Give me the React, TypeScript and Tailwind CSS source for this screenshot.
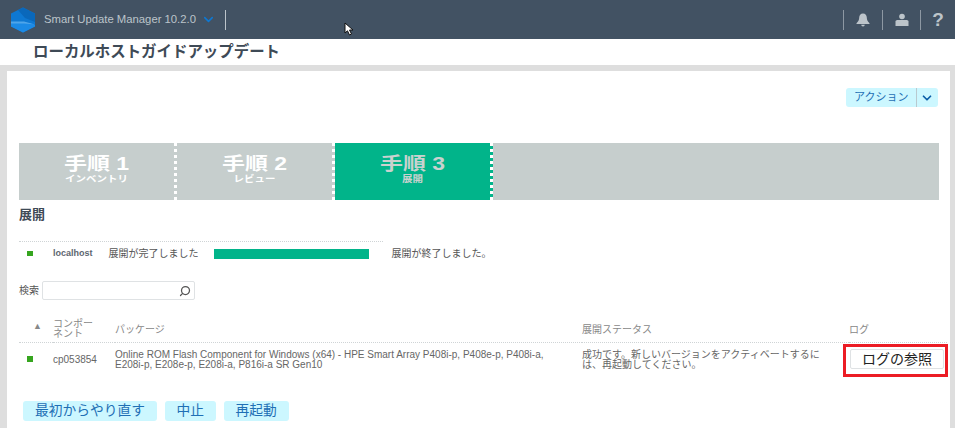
import { ChevronDown, Search } from "lucide-react";

const jp = "font-['Liberation_Sans','Noto_Sans_CJK_JP',sans-serif]";

function HexLogo() {
  return (
    <svg width="26" height="26" viewBox="0 0 26 26">
      <polygon points="13,0.5 25,6.5 25,19.5 13,25.5 1,19.5 1,6.5" fill="#0e78d2" />
      <polygon points="13,0.5 25,6.5 25,15 15,11 8,3" fill="#0a68bb" />
      <polygon points="1,15 14,15 25,18 25,19.5 13,25.5 1,19.5" fill="#1b8ae6" />
      <polygon points="1,14.500 14,14.500 25,17.500 14,16.500 1,16.500" fill="#4fa5ea" />
    </svg>
  );
}

function BellIcon() {
  return (
    <svg width="14" height="14" viewBox="0 0 14 14" fill="#bcc4ca">
      <path d="M7 .5c2.500 0 3.700 1.800 3.800 4 .1 2 .6 3.800 2.700 5.700V11H.5v-.8C2.600 8.300 3.100 6.500 3.200 4.500 3.300 2.300 4.500.5 7 .5z" />
      <path d="M5.200 11.800h3.600a1.800 1.600 0 0 1-3.600 0z" />
    </svg>
  );
}

function UserIcon() {
  return (
    <svg width="14" height="14" viewBox="0 0 14 14" fill="#bcc4ca">
      <ellipse cx="7" cy="3.500" rx="2.800" ry="2.800" />
      <path d="M.5 8.500c0-1 1-1.500 2.500-1.500h8c1.500 0 2.500.5 2.500 1.500V13H.5z" />
    </svg>
  );
}

function Cursor() {
  return (
    <svg className="absolute left-[344px] top-[22px]" width="10" height="14" viewBox="0 0 10 14">
      <path d="M1 1v10l2.500-2.200L5.500 13l2-1-2-4H9z" fill="#fff" stroke="#111" strokeWidth="1" />
    </svg>
  );
}

function Step({ title, sub, active }: { title: string; sub: string; active?: boolean }) {
  return (
    <div
      className={`flex h-full w-[158px] flex-col items-center border-r-[3px] border-dotted border-white pt-[11px] ${
        active ? "bg-[#01b48a] text-[#c9d2cf]" : "bg-[#c6cecd] text-white"
      }`}
    >
      <div className="scale-y-[0.78] text-[23px] leading-[21px] font-bold">{title}</div>
      <div className="mt-[-1px] scale-y-[0.85] text-[10.500px] leading-[10px] font-bold">{sub}</div>
    </div>
  );
}

function ActionButton({ label }: { label: string }) {
  return (
    <button className="h-[20px] rounded-[3px] bg-[#ccf7ff] px-[12px] text-[13.750px] leading-[20px] text-[#1f6fb5]">
      {label}
    </button>
  );
}

export default function App() {
  return (
    <div className={`relative h-[428px] w-[955px] overflow-hidden bg-white ${jp}`}>
      {/* top bar */}
      <header className="flex h-[39px] items-center bg-[#425263] pl-[10px] text-[#bcc4ca]">
        <HexLogo />
        <span className="ml-[8px] text-[11.300px]">Smart Update Manager 10.2.0</span>
        <ChevronDown size={15} strokeWidth={2.500} className="ml-[5px] text-[#0e78d2]" />
        <div className="ml-[9px] h-[20px] w-px bg-[#bcc4ca]" />
        <div className="ml-auto flex items-center">
          <div className="h-[20px] w-px bg-[#8d98a3]" />
          <div className="flex w-[38px] justify-center"><BellIcon /></div>
          <div className="h-[20px] w-px bg-[#8d98a3]" />
          <div className="flex w-[37px] justify-center"><UserIcon /></div>
          <div className="h-[20px] w-px bg-[#8d98a3]" />
          <div className="flex w-[34px] justify-center text-[19px] leading-none font-bold">?</div>
        </div>
      </header>
      <Cursor />

      <div className="flex h-[26px] items-center pl-[33px] text-[15.450px] font-bold text-[#3e4a56]">
        ローカルホストガイドアップデート
      </div>

      {/* grey page background */}
      <div className="h-[363px] bg-[#dedede] pt-[6px] pl-[7px] pr-[5px]">
        <main className="h-full bg-white pl-[12px] pr-[4px]">
          <div className="flex justify-end pt-[17px] pr-[8px]">
            <div className="flex h-[19px] w-[92px] items-center rounded-[3px] bg-[#ccf7ff] pl-[8px] text-[11px] text-[#1f6fb5]">
              アクション
              <div className="ml-[8px] h-[19px] w-px bg-[#b9c9cf]" />
              <ChevronDown size={14} strokeWidth={3} className="ml-[3px] text-[#0b5ea8]" />
            </div>
          </div>

          <div className="mt-[36px] mr-[7px] flex h-[57px] bg-[#c6cecd]">
            <Step title="手順 1" sub="インベントリ" />
            <Step title="手順 2" sub="レビュー" />
            <Step title="手順 3" sub="展開" active />
          </div>

          <h2 className="mt-[7px] text-[13px] leading-[16px] font-bold text-[#3e4a56]">展開</h2>

          <div className="mt-[18px] flex h-[24px] w-[364px] items-center border-t border-dotted border-[#cfd4d6] text-[10px] text-[#555]">
            <span className="ml-[8px] h-[5px] w-[6px] shrink-0 bg-[#36a51f]" />
            <span className="ml-[20px] shrink-0 text-[9px] font-bold text-[#5d6670]">localhost</span>
            <span className="ml-[16px] shrink-0">展開が完了しました</span>
            <span className="ml-[15px] h-[10px] w-[155px] shrink-0 bg-[#01b48a]" />
            <span className="ml-[23px] shrink-0">展開が終了しました。</span>
          </div>

          <div className="mt-[16px] flex items-center text-[10px] text-[#555]">
            <span className="w-[23px]">検索</span>
            <div className="flex h-[19px] w-[153px] items-center justify-end rounded-[2px] border border-[#dfe2e4] pr-[3px]">
              <Search size={12} strokeWidth={2.500} className="-scale-x-100 text-[#555]" />
            </div>
          </div>

          {/* table */}
          <div className="mt-[18px] mr-[-1px] grid grid-cols-[34px_62px_467px_267px_1fr] text-[10px] text-[#666]">
            <div className="flex items-center border-b border-dotted border-[#cfd4d6] pb-[6px] pl-[14px] text-[9px] text-[#888]">▲</div>
            <div className="border-b border-dotted border-[#cfd4d6] pt-[1px] pb-[3px] leading-[10px] text-[#888]">
              コンポー<br />ネント
            </div>
            <div className="flex items-center border-b border-dotted border-[#cfd4d6] pt-[1px] pb-[3px] text-[#888]">パッケージ</div>
            <div className="flex items-center border-b border-dotted border-[#cfd4d6] pt-[1px] pb-[3px] text-[#888]">展開ステータス</div>
            <div className="flex items-center border-b border-dotted border-[#cfd4d6] pt-[1px] pb-[3px] text-[#888]">ログ</div>

            <div className="flex items-center pl-[8px]">
              <span className="h-[6px] w-[6px] bg-[#36a51f]" />
            </div>
            <div className="flex items-center">cp053854</div>
            <div className="pt-[7px] leading-[10px]">
              Online ROM Flash Component for Windows (x64) - HPE Smart Array P408i-p, P408e-p, P408i-a,
              <br />
              E208i-p, E208e-p, E208i-a, P816i-a SR Gen10
            </div>
            <div className="pt-[7px] leading-[10px]">
              成功です。新しいバージョンをアクティベートするに
              <br />
              は、再起動してください。
            </div>
            <div className="py-[6px] pl-[1px]">
              <button className="h-[20px] w-[94px] rounded-[2px] border border-[#dfe2e4] bg-white text-[14px] leading-[18px] text-[#222]">
                ログの参照
              </button>
            </div>
          </div>

          <div className="mt-[26px] ml-[4px] flex gap-[7.500px]">
            <ActionButton label="最初からやり直す" />
            <ActionButton label="中止" />
            <ActionButton label="再起動" />
          </div>
        </main>
      </div>

      {/* red annotation around the log button */}
      <div className="absolute left-[843px] top-[344px] h-[33px] w-[105px] border-[3px] border-[#ec1c24]" />
    </div>
  );
}
